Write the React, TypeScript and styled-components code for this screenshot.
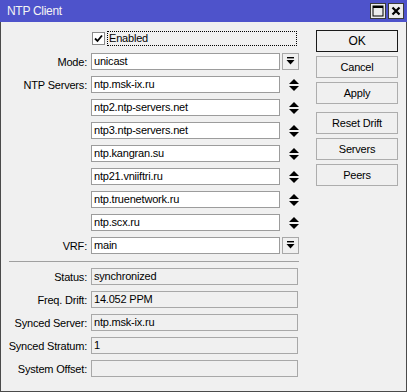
import styled, { createGlobalStyle } from 'styled-components'

const Global = createGlobalStyle`
  html, body { margin: 0; padding: 0; background: #f0f0f0; }
  * { box-sizing: border-box; }
`

const Window = styled.div`
  width: 407px;
  height: 392px;
  display: flex;
  flex-direction: column;
  background: #f0f0f0;
  border: 1px solid #4a4a4a;
  border-top: none;
  font-family: 'Liberation Sans', Arial, sans-serif;
  font-size: 11px;
  color: #000;
`

const TitleBar = styled.div`
  height: 22px;
  margin: 0 -1px;
  background: #4e53cb;
  display: flex;
  align-items: center;
  padding: 0 3px 0 7px;
  color: #f4f4f4;
  font-size: 12px;
  letter-spacing: -0.3px;
`

const Title = styled.div`
  flex: 1;
`

const TitleBtn = styled.div`
  width: 16px;
  height: 16px;
  margin-left: 2px;
  background: #ececec;
  border: 1px solid #3a3a3a;
  display: flex;
  align-items: center;
  justify-content: center;
`

const Body = styled.div`
  flex: 1;
  display: flex;
  padding: 8px 8px 0 4px;
  gap: 17px;
`

const Form = styled.div`
  width: 294px;
  display: flex;
  flex-direction: column;
  gap: 6px;
`

const Row = styled.div`
  display: grid;
  grid-template-columns: 82px 189px 18px;
  column-gap: 4px;
  align-items: center;
  height: 17px;
`

const WideRow = styled(Row)`
  grid-template-columns: 82px 207px;
`

const Label = styled.div`
  text-align: right;
  white-space: nowrap;
  letter-spacing: -0.2px;
`

const Field = styled.div<{ $ro?: boolean }>`
  height: 17px;
  border: 1px solid ${({ $ro }) => ($ro ? '#a8a8a8' : '#9c9c9c')};
  background: ${({ $ro }) => ($ro ? '#f0f0f0' : '#fff')};
  padding: 0 2px;
  line-height: 15px;
  white-space: nowrap;
  overflow: hidden;
  letter-spacing: -0.2px;
`

const DropBtn = styled.div`
  width: 17px;
  height: 17px;
  margin-left: -2px;
  border: 1px solid #a8a8a8;
  background: #f0f0f0;
  display: flex;
  align-items: center;
  justify-content: center;
`

const Arrows = styled.div`
  display: flex;
  align-items: center;
  justify-content: center;
  margin-left: 1px;
`

const CheckRow = styled.div`
  grid-column: 2 / 4;
  display: flex;
  align-items: center;
  gap: 2px;
`

const CheckBox = styled.div`
  flex-shrink: 0;
  width: 13px;
  height: 13px;
  margin-left: 1px;
  background: #fff;
  border: 1px solid #8a8a8a;
  display: flex;
  align-items: center;
  justify-content: center;
`

const Focus = styled.div`
  flex-shrink: 0;
  width: 190px;
  height: 15px;
  border: 1px dotted #000;
  line-height: 13px;
  padding-left: 1px;
  letter-spacing: -0.2px;
`

const Separator = styled.div`
  height: 1px;
  margin: 1px 0 0 4px;
  background: #a0a0a0;
`

const Buttons = styled.div`
  display: flex;
  flex-direction: column;
  width: 83px;
`

const Group = styled.div`
  display: flex;
  flex-direction: column;
  gap: 4px;
  & + & { margin-top: 8px; }
`

const Button = styled.div<{ $default?: boolean }>`
  height: 22px;
  border: 1px solid ${({ $default }) => ($default ? '#1a1a1a' : '#adadad')};
  background: #f0f0f0;
  display: flex;
  align-items: center;
  justify-content: center;
  font-size: ${({ $default }) => ($default ? '12px' : '11px')};
  letter-spacing: -0.2px;
`

const DropIcon = () => (
  <svg width="9" height="9" viewBox="0 0 9 9">
    <rect x="1" y="0" width="7" height="1.4" fill="#000" />
    <path d="M0.5 3 L8.5 3 L4.5 7.5 Z" fill="#000" />
  </svg>
)

const UpDown = () => (
  <svg width="10" height="12" viewBox="0 0 10 12">
    <path d="M0 5 L10 5 L5 0 Z" fill="#000" />
    <path d="M0 7 L10 7 L5 12 Z" fill="#000" />
  </svg>
)

const SERVERS = [
  'ntp.msk-ix.ru',
  'ntp2.ntp-servers.net',
  'ntp3.ntp-servers.net',
  'ntp.kangran.su',
  'ntp21.vniiftri.ru',
  'ntp.truenetwork.ru',
  'ntp.scx.ru',
]

const STATUS = [
  ['Status:', 'synchronized'],
  ['Freq. Drift:', '14.052 PPM'],
  ['Synced Server:', 'ntp.msk-ix.ru'],
  ['Synced Stratum:', '1'],
  ['System Offset:', ''],
]

export default function App() {
  return (
    <>
      <Global />
      <Window>
        <TitleBar>
          <Title>NTP Client</Title>
          <TitleBtn>
            <svg width="12" height="12" viewBox="0 0 12 12">
              <rect x="1" y="1" width="10" height="10" fill="none" stroke="#000" strokeWidth="1" />
              <rect x="1" y="1" width="10" height="2" fill="#000" />
            </svg>
          </TitleBtn>
          <TitleBtn>
            <svg width="10" height="10" viewBox="0 0 10 10">
              <path d="M1.5 1.5 L8.5 8.5 M8.5 1.5 L1.5 8.5" stroke="#000" strokeWidth="2.2" />
            </svg>
          </TitleBtn>
        </TitleBar>
        <Body>
          <Form>
            <Row>
              <Label />
              <CheckRow>
                <CheckBox>
                  <svg width="9" height="9" viewBox="0 0 9 9">
                    <path d="M1 4.5 L3.5 7 L8 1.5" fill="none" stroke="#000" strokeWidth="1.8" />
                  </svg>
                </CheckBox>
                <Focus>Enabled</Focus>
              </CheckRow>
            </Row>
            <Row>
              <Label>Mode:</Label>
              <Field>unicast</Field>
              <DropBtn><DropIcon /></DropBtn>
            </Row>
            {SERVERS.map((s, i) => (
              <Row key={s}>
                <Label>{i === 0 ? 'NTP Servers:' : ''}</Label>
                <Field>{s}</Field>
                <Arrows><UpDown /></Arrows>
              </Row>
            ))}
            <Row>
              <Label>VRF:</Label>
              <Field>main</Field>
              <DropBtn><DropIcon /></DropBtn>
            </Row>
            <Separator />
            {STATUS.map(([l, v]) => (
              <WideRow key={l}>
                <Label>{l}</Label>
                <Field $ro>{v}</Field>
              </WideRow>
            ))}
          </Form>
          <Buttons>
            <Group>
              <Button $default>OK</Button>
              <Button>Cancel</Button>
              <Button>Apply</Button>
            </Group>
            <Group>
              <Button>Reset Drift</Button>
              <Button>Servers</Button>
              <Button>Peers</Button>
            </Group>
          </Buttons>
        </Body>
      </Window>
    </>
  )
}
